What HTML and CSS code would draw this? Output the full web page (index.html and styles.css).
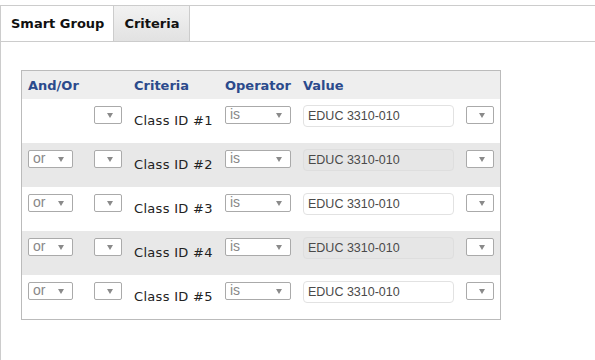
FILE: index.html
```html
<!DOCTYPE html>
<html lang="en">
<head>
    <meta charset="UTF-8">
    <meta name="viewport" content="width=device-width, initial-scale=1.0">
    <title>Smart Group - Criteria</title>
    <link rel="stylesheet" href="styles.css">
</head>
<body>
    <div class="panel">
        <div class="tabs">
            <div class="tab active">Smart Group</div>
            <div class="tab">Criteria</div>
        </div>
        <div class="content">
            <div class="criteria">
                <div class="row head">
                    <div>And/Or</div>
                    <div></div>
                    <div>Criteria</div>
                    <div>Operator</div>
                    <div>Value</div>
                    <div></div>
                </div>
                <div class="row">
                    <div></div>
                    <div><span class="select tiny"></span></div>
                    <div class="label">Class ID #1</div>
                    <div><span class="select op">is</span></div>
                    <div><span class="input">EDUC 3310-010</span></div>
                    <div><span class="select tiny"></span></div>
                </div>
                <div class="row alt">
                    <div><span class="select andor">or</span></div>
                    <div><span class="select tiny"></span></div>
                    <div class="label">Class ID #2</div>
                    <div><span class="select op">is</span></div>
                    <div><span class="input">EDUC 3310-010</span></div>
                    <div><span class="select tiny"></span></div>
                </div>
                <div class="row">
                    <div><span class="select andor">or</span></div>
                    <div><span class="select tiny"></span></div>
                    <div class="label">Class ID #3</div>
                    <div><span class="select op">is</span></div>
                    <div><span class="input">EDUC 3310-010</span></div>
                    <div><span class="select tiny"></span></div>
                </div>
                <div class="row alt">
                    <div><span class="select andor">or</span></div>
                    <div><span class="select tiny"></span></div>
                    <div class="label">Class ID #4</div>
                    <div><span class="select op">is</span></div>
                    <div><span class="input">EDUC 3310-010</span></div>
                    <div><span class="select tiny"></span></div>
                </div>
                <div class="row">
                    <div><span class="select andor">or</span></div>
                    <div><span class="select tiny"></span></div>
                    <div class="label">Class ID #5</div>
                    <div><span class="select op">is</span></div>
                    <div><span class="input">EDUC 3310-010</span></div>
                    <div><span class="select tiny"></span></div>
                </div>
            </div>
        </div>
    </div>
</body>
</html>
```

FILE: styles.css
```css
body {
    margin: 0;
    font-family: "DejaVu Sans", Verdana, sans-serif;
    background-color: #fff;
    color: #222;
}

.panel {
    margin-top: 5px;
    border-top: 1px solid #ccc;
    border-left: 1px solid #ccc;
    height: 354px;
}

.tabs {
    display: flex;
    height: 35px;
    border-bottom: 1px solid #ccc;
}

.tab {
    padding: 0 9px 0 10px;
    line-height: 35px;
    font-size: 13px;
    font-weight: bold;
    color: #111;
    border-right: 1px solid #ccc;
    background: linear-gradient(#f2f2f2, #e2e2e2);
}

.tab.active {
    background: #fff;
}

.content {
    padding: 28px 0 0 20px;
}

.criteria {
    width: 478px;
    border: 1px solid #bbb;
}

.row {
    display: grid;
    grid-template-columns: 66px 40px 91px 78px 163px 1fr;
    padding-left: 6px;
    height: 44px;
    box-sizing: border-box;
    padding-top: 7px;
    align-items: start;
}

.row.alt {
    background-color: #e8e8e8;
}

.row.head {
    height: 28px;
    padding-top: 0;
    align-items: center;
    background-color: #eee;
    font-size: 13px;
    font-weight: bold;
    color: #2b4a8c;
}

.label {
    font-size: 13px;
    line-height: 15px;
    margin-top: 7px;
    letter-spacing: 0.3px;
    color: #222;
}

.select {
    display: block;
    position: relative;
    box-sizing: border-box;
    height: 18px;
    border: 1px solid #aaa;
    border-radius: 2px;
    background-color: #fff;
    font-family: "Liberation Sans", Arial, sans-serif;
    font-size: 14px;
    line-height: 15px;
    color: #888;
    padding-left: 4px;
}

.select::after {
    content: "";
    position: absolute;
    right: 8px;
    top: 6px;
    border-left: 3px solid transparent;
    border-right: 3px solid transparent;
    border-top: 5px solid #8a8a8a;
}

.select.tiny {
    width: 28px;
}

.select.andor {
    width: 45px;
}

.select.op {
    width: 66px;
}

.input {
    display: block;
    box-sizing: border-box;
    width: 151px;
    height: 22px;
    margin-top: -1px;
    border: 1px solid #e2e2e2;
    border-radius: 4px;
    background-color: #fff;
    padding-left: 4px;
    font-family: "Liberation Sans", Arial, sans-serif;
    font-size: 12.5px;
    line-height: 20px;
    color: #4a4a4a;
}

.row.alt .input {
    background-color: #e6e6e6;
    border-color: #dedede;
}
```
